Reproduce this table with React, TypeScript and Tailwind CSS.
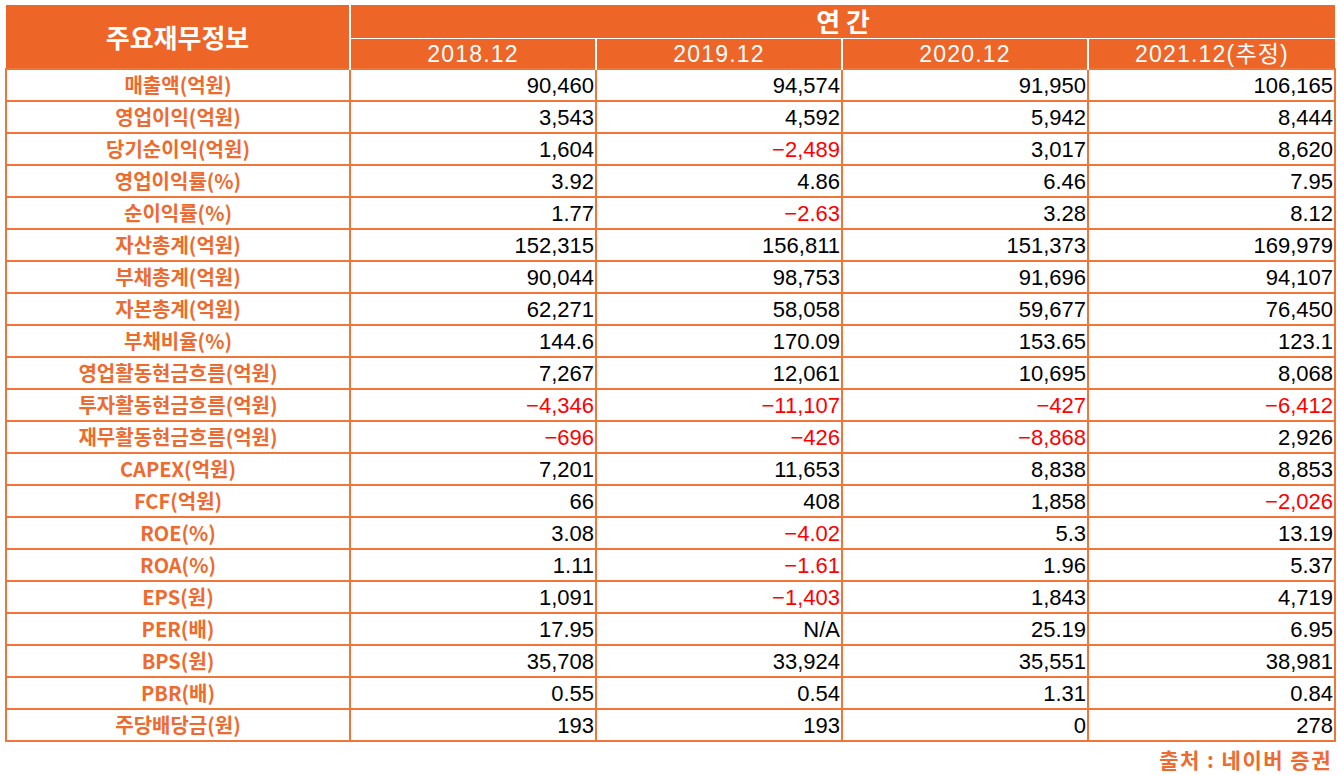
const years = ["2018.12", "2019.12", "2020.12", "2021.12(추정)"];

const rows: [string, string[]][] = [
  ["매출액(억원)", ["90,460", "94,574", "91,950", "106,165"]],
  ["영업이익(억원)", ["3,543", "4,592", "5,942", "8,444"]],
  ["당기순이익(억원)", ["1,604", "−2,489", "3,017", "8,620"]],
  ["영업이익률(%)", ["3.92", "4.86", "6.46", "7.95"]],
  ["순이익률(%)", ["1.77", "−2.63", "3.28", "8.12"]],
  ["자산총계(억원)", ["152,315", "156,811", "151,373", "169,979"]],
  ["부채총계(억원)", ["90,044", "98,753", "91,696", "94,107"]],
  ["자본총계(억원)", ["62,271", "58,058", "59,677", "76,450"]],
  ["부채비율(%)", ["144.6", "170.09", "153.65", "123.1"]],
  ["영업활동현금흐름(억원)", ["7,267", "12,061", "10,695", "8,068"]],
  ["투자활동현금흐름(억원)", ["−4,346", "−11,107", "−427", "−6,412"]],
  ["재무활동현금흐름(억원)", ["−696", "−426", "−8,868", "2,926"]],
  ["CAPEX(억원)", ["7,201", "11,653", "8,838", "8,853"]],
  ["FCF(억원)", ["66", "408", "1,858", "−2,026"]],
  ["ROE(%)", ["3.08", "−4.02", "5.3", "13.19"]],
  ["ROA(%)", ["1.11", "−1.61", "1.96", "5.37"]],
  ["EPS(원)", ["1,091", "−1,403", "1,843", "4,719"]],
  ["PER(배)", ["17.95", "N/A", "25.19", "6.95"]],
  ["BPS(원)", ["35,708", "33,924", "35,551", "38,981"]],
  ["PBR(배)", ["0.55", "0.54", "1.31", "0.84"]],
  ["주당배당금(원)", ["193", "193", "0", "278"]],
];

const kr = "font-['Noto_Sans_CJK_KR',sans-serif]";

export default function App() {
  return (
    <div className="w-[1340px] h-[775px] overflow-hidden bg-white pt-[5px] pl-[5px] font-['Liberation_Sans','Noto_Sans_CJK_KR',sans-serif]">
      <table className="table-fixed border-collapse w-[1329px]">
        <colgroup>
          <col className="w-[344px]" />
          <col className="w-[246px]" />
          <col className="w-[246px]" />
          <col className="w-[246px]" />
          <col className="w-[247px]" />
        </colgroup>
        <thead>
          <tr className="h-[33px]">
            <th
              rowSpan={2}
              className={`bg-[#ee6528] border-r-2 border-white text-white text-[26px] font-bold leading-none pt-[1px] ${kr}`}
            >
              주요재무정보
            </th>
            <th
              colSpan={4}
              className={`bg-[#ee6528] border-b border-white text-white text-[26px] font-bold leading-none ${kr}`}
            >
              연 간
            </th>
          </tr>
          <tr className="h-[31px]">
            {years.map((y, i) => (
              <th
                key={y}
                className={`bg-[#ee6528] text-white text-[23px] font-normal leading-none tracking-[1.2px] pt-[2px] ${
                  i < 3 ? "border-r-2 border-white" : ""
                }`}
              >
                {y}
              </th>
            ))}
          </tr>
        </thead>
        <tbody>
          {rows.map(([label, vals]) => (
            <tr key={label} className="h-[32px]">
              <td className={`border-2 border-[#f07538] text-center text-[20px] font-bold text-[#ee6a2e] leading-none ${kr}`}>
                {label}
              </td>
              {vals.map((v, i) => (
                <td
                  key={i}
                  className={`border-2 border-[#f07538] text-right pr-[1px] pt-[2px] text-[22px] leading-none ${
                    v.startsWith("−") ? "text-[#ff0000]" : "text-black"
                  }`}
                >
                  {v}
                </td>
              ))}
            </tr>
          ))}
        </tbody>
      </table>
      <div className={`w-[1329px] text-right pr-[2px] mt-[4px] text-[21px] leading-[26px] font-bold text-[#ee6a2e] tracking-[1.5px] ${kr}`}>
        출처 : 네이버 증권
      </div>
    </div>
  );
}
